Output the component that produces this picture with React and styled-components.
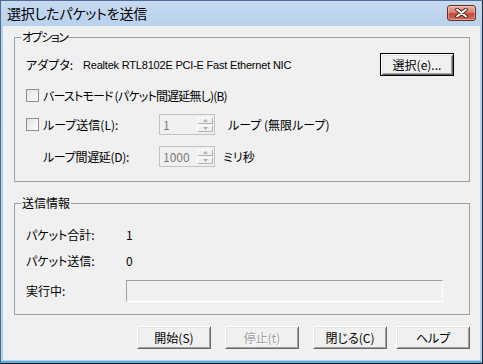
import React from 'react';
import styled, { createGlobalStyle } from 'styled-components';

const GlobalStyle = createGlobalStyle`
  html, body { margin:0; padding:0; background:#fff; }
  body {
    font-family: "Noto Sans CJK JP", "Liberation Sans", sans-serif;
    font-size:12px;
    color:#000;
    font-feature-settings: "palt";
  }
  * { box-sizing:border-box; }
`;

const Window = styled.div`
  width:483px;
  height:364px;
  display:flex;
  flex-direction:column;
  background:linear-gradient(#c6daf1, #b6cfeb 30px, #b4cdea);
  border:1px solid #4f6d90;
  border-right-color:#202a36;
  border-bottom-color:#111;
  padding:0 2px 3px 2px;
  box-shadow:inset 0 -2px 0 #5cb0e4;
`;

const TitleBar = styled.div`
  height:25px;
  flex-shrink:0;
  display:flex;
  align-items:flex-start;
  justify-content:space-between;
`;

const Title = styled.span`
  padding-left:4px;
  font-size:14px;
  line-height:25px;
  letter-spacing:-0.2px;
`;

const CloseButton = styled.div`
  width:29px;
  height:16px;
  margin:4px 4px 0 0;
  border:1px solid #6e2b22;
  border-radius:3px;
  background:linear-gradient(#e9ad9f, #d98272 45%, #c34a36 55%, #d0705c);
  box-shadow:inset 0 0 0 1px rgba(255,255,255,0.35);
  display:flex;
  align-items:center;
  justify-content:center;
`;

const Client = styled.div`
  flex:1;
  background:#f0f0f0;
  padding:4px 10px 0 11px;
  display:flex;
  flex-direction:column;
`;

const Group = styled.fieldset`
  margin:${p => p.$top || 0}px 0 0 0;
  padding:0;
  border:1px solid #a0a0a0;
  min-width:0;
`;

const Legend = styled.legend`
  margin-left:6px;
  padding:0 1px;
  line-height:14px;
  font-size:12px;
  letter-spacing:${p => p.$tight || 0}px;
`;

const GroupBody = styled.div`
  padding:0 15px ${p => p.$bottom}px 11px;
  display:flex;
  flex-direction:column;
`;

const Row = styled.div`
  display:flex;
  align-items:center;
  height:${p => p.$h || 21}px;
  margin-top:${p => p.$top || 0}px;
`;

const Label = styled.span`
  width:${p => p.$w ? `${p.$w}px` : 'auto'};
  flex-shrink:0;
  line-height:16px;
  padding-left:${p => p.$indent || 0}px;
  letter-spacing:${p => p.$tight || 0}px;
`;

const Device = styled.span`
  flex:1;
  font-family:"Liberation Sans", Arial, sans-serif;
  font-size:11px;
  letter-spacing:-0.2px;
  font-feature-settings:normal;
`;

const Button = styled.div`
  width:${p => p.$w || 74}px;
  height:23px;
  display:flex;
  align-items:center;
  justify-content:center;
  background:#f0f0f0;
  color:${p => p.$disabled ? '#a0a0a0' : '#000'};
  border:1px solid;
  border-color:${p => p.$default ? '#000' : '#fff #696969 #696969 #fff'};
  box-shadow:${p => p.$default
    ? 'inset 1px 1px #fff, inset -1px -1px #696969, inset 2px 2px #e3e3e3, inset -2px -2px #a0a0a0'
    : 'inset 1px 1px #e3e3e3, inset -1px -1px #a0a0a0'};
  margin-left:${p => p.$left || 0}px;
  text-shadow:${p => p.$disabled ? '1px 1px 0 #fff' : 'none'};
`;

const Check = styled.span`
  width:13px;
  height:13px;
  flex-shrink:0;
  border:1px solid #8e8f8f;
  background:linear-gradient(135deg, #e4e4e4, #fdfdfd);
  margin-right:4px;
`;

const CheckLabel = styled.label`
  display:flex;
  align-items:center;
  width:${p => p.$w ? `${p.$w}px` : 'auto'};
  flex-shrink:0;
  letter-spacing:${p => p.$tight || 0}px;
`;

const Spin = styled.div`
  width:56px;
  height:21px;
  flex-shrink:0;
  display:flex;
  border:1px solid #c3c3c3;
  background:#f0f0f0;
  padding:2px 1px 2px 2px;
`;

const SpinValue = styled.span`
  flex:1;
  color:#7a7a7a;
  line-height:15px;
  padding-left:1px;
`;

const UpDown = styled.div`
  width:16px;
  display:flex;
  flex-direction:column;
  gap:1px;
`;

const Arrow = styled.span`
  flex:1;
  border:1px solid;
  border-color:#fff #b5b5b5 #b5b5b5 #fff;
  display:flex;
  align-items:center;
  justify-content:center;
`;

const After = styled.span`
  margin-left:${p => p.$gap}px;
  line-height:16px;
`;

const Value = styled.span`
  line-height:16px;
`;

const Progress = styled.div`
  width:317px;
  height:22px;
  border:1px solid;
  border-color:#a0a0a0 #fff #fff #a0a0a0;
`;

const Buttons = styled.div`
  display:flex;
  justify-content:flex-end;
  margin-top:11px;
`;

const Tri = ({ down }) => (
  <svg width="5" height="3" viewBox="0 0 5 3">
    <path d={down ? 'M0 0H5L2.5 3Z' : 'M0 3H5L2.5 0Z'} fill="#b0b0b0" />
  </svg>
);

const SpinBox = ({ value }) => (
  <Spin>
    <SpinValue>{value}</SpinValue>
    <UpDown>
      <Arrow><Tri /></Arrow>
      <Arrow><Tri down /></Arrow>
    </UpDown>
  </Spin>
);

export default function App() {
  return (
    <>
      <GlobalStyle />
      <Window>
        <TitleBar>
          <Title>選択したパケットを送信</Title>
          <CloseButton>
            <svg width="13" height="10" viewBox="0 0 13 10">
              <path d="M2 1.5L11 8.5M11 1.5L2 8.5" stroke="#4a1a14" strokeWidth="3.6" strokeLinecap="round" />
              <path d="M2 1.5L11 8.5M11 1.5L2 8.5" stroke="#fff" strokeWidth="2" strokeLinecap="round" />
            </svg>
          </CloseButton>
        </TitleBar>
        <Client>
          <Group>
            <Legend $tight={-1.5}>オプション</Legend>
            <GroupBody $bottom={14}>
              <Row $h={23} $top={9}>
                <Label $w={57}>アダプタ:</Label>
                <Device>Realtek RTL8102E PCI-E Fast Ethernet NIC</Device>
                <Button $default>選択(e)...</Button>
              </Row>
              <Row $top={9}>
                <CheckLabel $tight={-0.8}>
                  <Check />
                  バーストモード (パケット間遅延無し)(B)
                </CheckLabel>
              </Row>
              <Row $top={8}>
                <CheckLabel $w={133}>
                  <Check />
                  ループ送信(L):
                </CheckLabel>
                <SpinBox value="1" />
                <After $gap={13}>ループ (無限ループ)</After>
              </Row>
              <Row $top={11}>
                <Label $w={133} $indent={17} $tight={-0.3}>ループ間遅延(D):</Label>
                <SpinBox value="1000" />
                <After $gap={8}>ミリ秒</After>
              </Row>
            </GroupBody>
          </Group>
          <Group $top={14}>
            <Legend>送信情報</Legend>
            <GroupBody $bottom={12}>
              <Row $h={20} $top={15}>
                <Label $w={100}>パケット合計:</Label>
                <Value>1</Value>
              </Row>
              <Row $h={20} $top={6}>
                <Label $w={100}>パケット送信:</Label>
                <Value>0</Value>
              </Row>
              <Row $h={22} $top={9}>
                <Label $w={100}>実行中:</Label>
                <Progress />
              </Row>
            </GroupBody>
          </Group>
          <Buttons>
            <Button>開始(S)</Button>
            <Button $disabled $left={14}>停止(t)</Button>
            <Button $left={14}>閉じる(C)</Button>
            <Button $left={9}>ヘルプ</Button>
          </Buttons>
        </Client>
      </Window>
    </>
  );
}
